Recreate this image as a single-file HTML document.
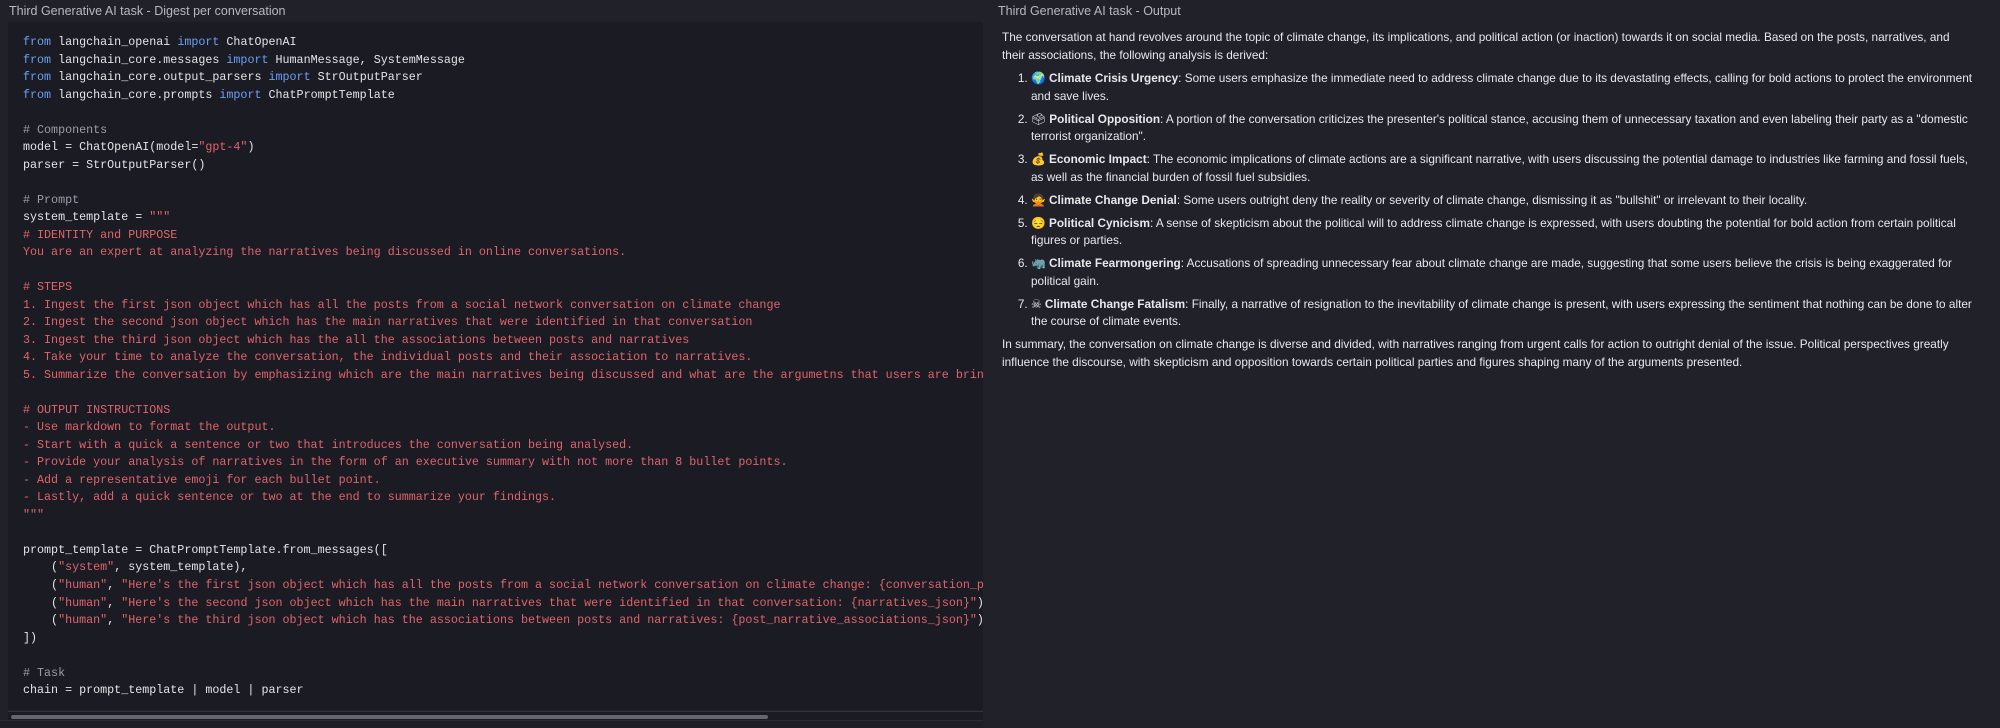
<!DOCTYPE html>
<html><head><meta charset="utf-8"><style>
html,body{margin:0;padding:0;width:2000px;height:727px;overflow:hidden;background:#212129;}
.hdr{position:absolute;top:3px;font:12.5px "Liberation Sans",sans-serif;color:#b8b8c0;line-height:16px;white-space:nowrap;}
.code{position:absolute;left:8px;top:22px;width:975px;height:688px;background:#1b1b23;overflow:hidden;}
pre{margin:0;padding:12px 15px;font:11.7px/17.52px "Liberation Mono",monospace;color:#e4e4e8;white-space:pre;}
.k{color:#6f9ef5}.s{color:#e0646c}.c{color:#9d9da8}
.track{position:absolute;left:8px;top:711px;width:975px;height:8px;background:#1b1b23;border-top:1px solid #33333d;}
.thumb{position:absolute;left:3px;top:3px;width:757px;height:4px;border-radius:2px;background:#66666f;}
.below{position:absolute;left:0;top:720px;width:983px;height:7px;border-top:1px solid #2c2c35;background:#1e1e26;}
.out{position:absolute;left:1002px;top:29px;font:11.8px/17.5px "Liberation Sans","Noto Sans CJK SC",sans-serif;color:#e8e8ec;white-space:nowrap;}
.out p{margin:0}
ol{margin:6px 0 0 0;padding-left:29px}
li{margin-bottom:5.5px}
b{font-weight:bold}
</style></head><body>
<div class="hdr" style="left:9px">Third Generative AI task - Digest per conversation</div>
<div class="hdr" style="left:998px">Third Generative AI task - Output</div>
<div class="code"><pre><span class="k">from</span> langchain_openai <span class="k">import</span> ChatOpenAI
<span class="k">from</span> langchain_core.messages <span class="k">import</span> HumanMessage, SystemMessage
<span class="k">from</span> langchain_core.output_parsers <span class="k">import</span> StrOutputParser
<span class="k">from</span> langchain_core.prompts <span class="k">import</span> ChatPromptTemplate

<span class="c"># Components</span>
model = ChatOpenAI(model=<span class="s">"gpt-4"</span>)
parser = StrOutputParser()

<span class="c"># Prompt</span>
system_template = <span class="s">"""
# IDENTITY and PURPOSE
You are an expert at analyzing the narratives being discussed in online conversations.

# STEPS
1. Ingest the first json object which has all the posts from a social network conversation on climate change
2. Ingest the second json object which has the main narratives that were identified in that conversation
3. Ingest the third json object which has the all the associations between posts and narratives
4. Take your time to analyze the conversation, the individual posts and their association to narratives.
5. Summarize the conversation by emphasizing which are the main narratives being discussed and what are the argumetns that users are bringing

# OUTPUT INSTRUCTIONS
- Use markdown to format the output.
- Start with a quick a sentence or two that introduces the conversation being analysed.
- Provide your analysis of narratives in the form of an executive summary with not more than 8 bullet points.
- Add a representative emoji for each bullet point.
- Lastly, add a quick sentence or two at the end to summarize your findings.
"""</span>

prompt_template = ChatPromptTemplate.from_messages([
    (<span class="s">"system"</span>, system_template),
    (<span class="s">"human"</span>, <span class="s">"Here's the first json object which has all the posts from a social network conversation on climate change: {conversation_posts_json}"</span>),
    (<span class="s">"human"</span>, <span class="s">"Here's the second json object which has the main narratives that were identified in that conversation: {narratives_json}"</span>),
    (<span class="s">"human"</span>, <span class="s">"Here's the third json object which has the associations between posts and narratives: {post_narrative_associations_json}"</span>),
])

<span class="c"># Task</span>
chain = prompt_template | model | parser</pre></div>
<div class="track"><div class="thumb"></div></div>
<div class="below"></div>
<div class="out">
<p>The conversation at hand revolves around the topic of climate change, its implications, and political action (or inaction) towards it on social media. Based on the posts, narratives, and<br>their associations, the following analysis is derived:</p>
<ol>
<li>🌍 <b>Climate Crisis Urgency</b>: Some users emphasize the immediate need to address climate change due to its devastating effects, calling for bold actions to protect the environment<br>and save lives.</li>
<li>🗳 <b>Political Opposition</b>: A portion of the conversation criticizes the presenter's political stance, accusing them of unnecessary taxation and even labeling their party as a "domestic<br>terrorist organization".</li>
<li>💰 <b>Economic Impact</b>: The economic implications of climate actions are a significant narrative, with users discussing the potential damage to industries like farming and fossil fuels,<br>as well as the financial burden of fossil fuel subsidies.</li>
<li>🙅 <b>Climate Change Denial</b>: Some users outright deny the reality or severity of climate change, dismissing it as "bullshit" or irrelevant to their locality.</li>
<li>😔 <b>Political Cynicism</b>: A sense of skepticism about the political will to address climate change is expressed, with users doubting the potential for bold action from certain political<br>figures or parties.</li>
<li>🦏 <b>Climate Fearmongering</b>: Accusations of spreading unnecessary fear about climate change are made, suggesting that some users believe the crisis is being exaggerated for<br>political gain.</li>
<li>☠ <b>Climate Change Fatalism</b>: Finally, a narrative of resignation to the inevitability of climate change is present, with users expressing the sentiment that nothing can be done to alter<br>the course of climate events.</li>
</ol>
<p>In summary, the conversation on climate change is diverse and divided, with narratives ranging from urgent calls for action to outright denial of the issue. Political perspectives greatly<br>influence the discourse, with skepticism and opposition towards certain political parties and figures shaping many of the arguments presented.</p>
</div>
</body></html>
